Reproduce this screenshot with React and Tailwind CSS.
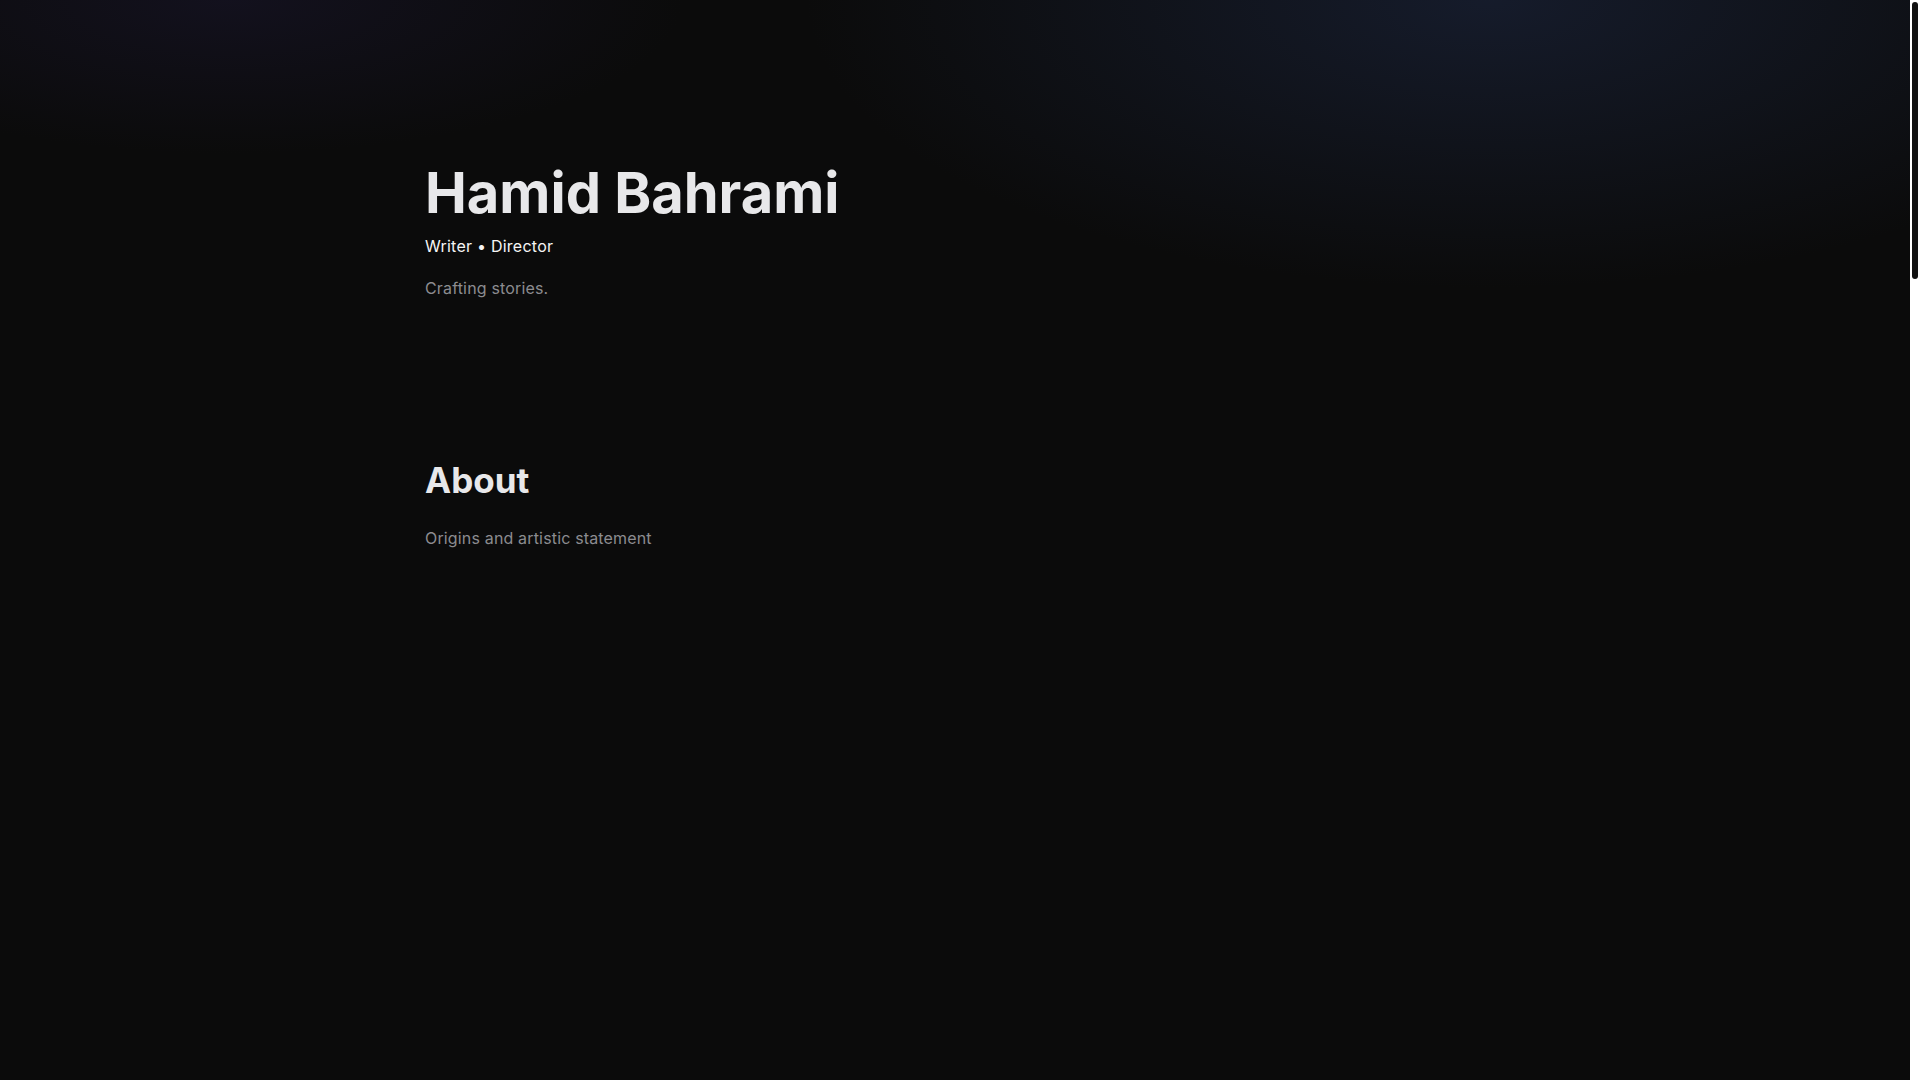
import React from "react";

export default function App() {
  return (
    <div
      className="flex h-screen overflow-hidden bg-white text-zinc-200"
      style={{ fontFamily: "Inter, 'Noto Sans', sans-serif" }}
    >
      <div className="relative flex-1 overflow-y-auto bg-[#0b0b0b] [scrollbar-width:none]">
        {/* soft glows behind the hero */}
        <div className="pointer-events-none absolute inset-x-0 top-0 h-[560px] bg-[radial-gradient(ellipse_950px_400px_at_78%_0%,rgba(28,38,64,0.6),transparent_72%)]" />
        <div className="pointer-events-none absolute inset-x-0 top-0 h-[400px] bg-[radial-gradient(ellipse_650px_220px_at_12%_0%,rgba(28,24,52,0.45),transparent_70%)]" />

        <main className="relative mx-auto min-h-[4150px] max-w-6xl px-[46px]">
          <header className="pt-[163px]">
            <h1 className="text-[56px] font-bold leading-[1.1] tracking-normal text-[#e8e8ea]">
              Hamid Bahrami
            </h1>
            <p className="mt-[9px] text-base font-normal tracking-[0.015em] text-neutral-100">
              Writer • Director
            </p>
            <p className="mt-[18px] text-base tracking-[0.01em] text-[#8c8c90]">
              Crafting stories.
            </p>
          </header>

          <section className="pt-[160px]">
            <h2 className="text-[35px] font-bold leading-10 text-[#e8e8ea]">About</h2>
            <p className="mt-[26px] text-base tracking-[0.01em] text-[#8c8c90]">
              Origins and artistic statement
            </p>
          </section>
        </main>
      </div>

      {/* page scroll rail */}
      <div className="w-[10px] shrink-0 bg-white p-[2px]">
        <div className="h-[277px] rounded-full bg-[#111111]" />
      </div>
    </div>
  );
}
